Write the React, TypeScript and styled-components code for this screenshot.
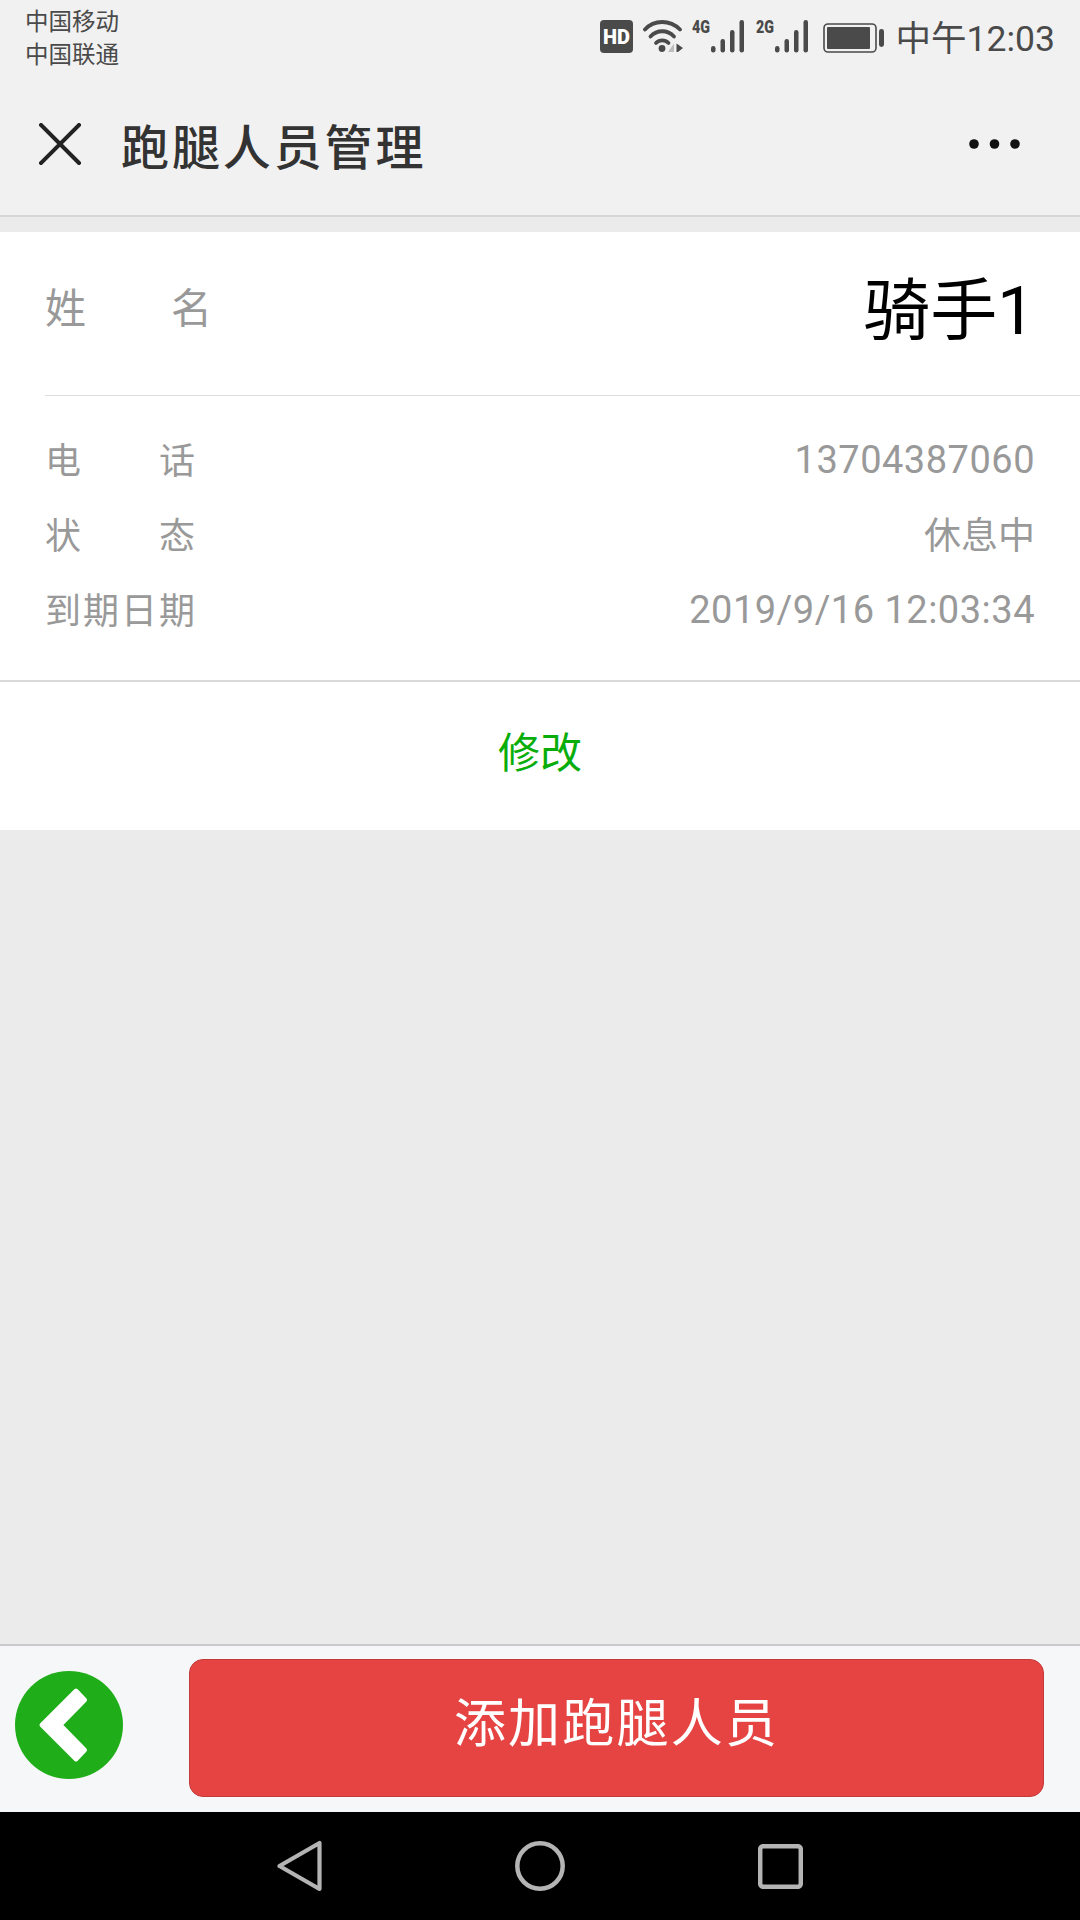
import React from 'react';
import styled, { createGlobalStyle } from 'styled-components';

const FONT = `"Noto Sans CJK SC", sans-serif`;
const NUM_FONT = `Roboto, "Noto Sans CJK SC", sans-serif`;

const GlobalStyle = createGlobalStyle`
  html, body {
    margin: 0;
    padding: 0;
    background: #ebebeb;
  }
  * { box-sizing: border-box; }
`;

const Page = styled.div`
  width: 1080px;
  height: 1920px;
  display: flex;
  flex-direction: column;
  font-family: ${FONT};
  background: #ebebeb;
  overflow: hidden;
`;

// --- status bar ---
const StatusBar = styled.div`
  height: 72px;
  flex: none;
  background: #f1f1f1;
  display: flex;
  justify-content: space-between;
  padding: 4px 25px 0 25px;
  color: #4a4a4a;
`;

const Carriers = styled.div`
  font-size: 23.5px;
  line-height: 33px;
`;

const StatusRight = styled.div`
  display: flex;
  align-items: flex-start;
  padding-top: 15px;
`;

const Icon = styled.svg<{ $left?: number; $top?: number }>`
  flex: none;
  margin-left: ${(p) => p.$left ?? 0}px;
  margin-top: ${(p) => p.$top ?? 0}px;
`;

const Clock = styled.span`
  font-family: ${NUM_FONT};
  font-size: 35.5px;
  line-height: 36px;
  margin-top: 2px;
  margin-left: 12px;
`;

// --- title bar ---
const TitleBar = styled.div`
  height: 145px;
  flex: none;
  background: #f1f1f1;
  border-bottom: 2px solid #d6d6d6;
  display: flex;
  align-items: center;
  padding: 0 60px 0 39px;
  margin-bottom: 15px;
`;

const Title = styled.h1`
  margin: 0 0 0 40px;
  flex: 1;
  font-size: 48px;
  font-weight: 500;
  letter-spacing: 2.9px;
  color: #333;
`;

// --- info card ---
const Card = styled.section`
  background: #fff;
`;

const NameRow = styled.div`
  height: 164px;
  margin-left: 45px;
  padding: 0 45px 14px 0;
  border-bottom: 1px solid #dedede;
  display: flex;
  justify-content: space-between;
  align-items: center;
`;

const NameLabel = styled.span`
  width: 167px;
  margin-bottom: 3px;
  display: flex;
  justify-content: space-between;
  font-size: 41px;
  color: #999;
`;

const NameValue = styled.span`
  font-family: ${NUM_FONT};
  font-size: 67px;
  margin-bottom: 5px;
  color: #000;
`;

const Details = styled.div`
  padding: 25px 45px 35px 45px;
  border-bottom: 2px solid #d9d9d9;
`;

const DetailRow = styled.div`
  height: 74.7px;
  display: flex;
  justify-content: space-between;
  align-items: center;
  color: #999;
  font-size: 36px;
`;

const DetailLabel = styled.span`
  width: 150px;
  display: flex;
  justify-content: space-between;
`;

const DetailValue = styled.span<{ $numeric: boolean }>`
  font-family: ${NUM_FONT};
  font-size: ${(p) => (p.$numeric ? '38px' : '37px')};
  letter-spacing: ${(p) => (p.$numeric ? '0.5px' : '0')};
  padding-top: ${(p) => (p.$numeric ? '4px' : '0')};
`;

const EditRow = styled.div`
  height: 148px;
  padding-bottom: 14px;
  display: flex;
  align-items: center;
  justify-content: center;
  font-size: 42px;
  color: #09ad09;
`;

const Spacer = styled.div`
  flex: 1;
`;

// --- bottom action bar ---
const ActionBar = styled.div`
  height: 168px;
  flex: none;
  background: #f6f7f9;
  border-top: 2px solid #c8c8cc;
  display: flex;
  padding: 13px 36px 0 15px;
`;

const BackCircle = styled.svg`
  width: 108px;
  height: 108px;
  margin-top: 12px;
  flex: none;
`;

const AddButton = styled.div`
  margin-left: 66px;
  flex: 1;
  height: 138px;
  padding-bottom: 18px;
  border-radius: 14px;
  background: #e64343;
  border: 1px solid #c23c3c;
  color: #fff;
  font-size: 52px;
  letter-spacing: 2.2px;
  display: flex;
  align-items: center;
  justify-content: center;
`;

// --- android nav bar ---
const NavBar = styled.div`
  height: 108px;
  flex: none;
  background: #000;
  display: flex;
  align-items: center;
  justify-content: center;
  gap: 193px;
`;

const HdBadge = () => (
  <Icon $top={1} width="33" height="33" viewBox="0 0 33 33">
    <rect width="33" height="33" rx="4" fill="#4a4a4a" />
    <text x="16.5" y="23.5" textAnchor="middle" fontFamily="Roboto, sans-serif" fontWeight="900" fontSize="20" fill="#fff" textLength="27" lengthAdjust="spacingAndGlyphs">HD</text>
  </Icon>
);

const Wifi = () => (
  <Icon $left={10} width="40" height="34" viewBox="0 0 40 34" fill="none">
    <path d="M2 10.5C11 0.5 27 0.5 37 10.5" stroke="#4a4a4a" strokeWidth="3.8" strokeLinecap="round" />
    <path d="M7.5 17.5C14 10.5 24.5 10.5 31 17.5" stroke="#4a4a4a" strokeWidth="3.8" strokeLinecap="round" />
    <path d="M13 24C16.5 20.5 22 20.5 25.5 24" stroke="#4a4a4a" strokeWidth="3.8" strokeLinecap="round" />
    <circle cx="19" cy="29.5" r="3.4" fill="#4a4a4a" />
    <path d="M31 24.5v8.5h-6z" fill="#bdbdbd" />
    <path d="M33.5 24.5v8.5h1.5l5-4z" fill="#4a4a4a" />
  </Icon>
);

// viewBox starts above the bars so the label's line box stays inside the svg
const Signal = ({ label, left }: { label: string; left: number }) => (
  <Icon $left={left} $top={-6} width="53" height="40" viewBox="0 -6 53 40">
    <text x="0" y="14" fontFamily="Roboto, sans-serif" fontWeight="900" fontSize="19" fill="#4a4a4a" textLength="18" lengthAdjust="spacingAndGlyphs">{label}</text>
    <rect x="19" y="27" width="4.5" height="6.5" rx="2.2" fill="#4a4a4a" />
    <rect x="28.5" y="20" width="4.5" height="13.5" rx="2.2" fill="#4a4a4a" />
    <rect x="38" y="11" width="4.5" height="22.5" rx="2.2" fill="#4a4a4a" />
    <rect x="47.5" y="1" width="4.5" height="32.5" rx="2.2" fill="#4a4a4a" />
  </Icon>
);

const Battery = () => (
  <Icon $left={14} $top={4} width="61" height="30" viewBox="0 0 61 30">
    <rect x="1" y="1" width="52" height="28" rx="4" fill="none" stroke="#4a4a4a" strokeWidth="1.6" />
    <rect x="4" y="4" width="43" height="22" rx="1" fill="#4a4a4a" />
    <rect x="56" y="6" width="5" height="18" rx="2.4" fill="#4a4a4a" />
  </Icon>
);

const CloseIcon = () => (
  <svg width="42" height="42" viewBox="0 0 42 42">
    <path d="M2 2L40 40M40 2L2 40" stroke="#222" strokeWidth="4" strokeLinecap="square" />
  </svg>
);

const MoreIcon = () => (
  <svg width="51" height="10" viewBox="0 0 51 10" fill="#111">
    <circle cx="5" cy="5" r="4.8" />
    <circle cx="25.5" cy="5" r="4.8" />
    <circle cx="46" cy="5" r="4.8" />
  </svg>
);

const NavBack = () => (
  <svg width="45" height="52" viewBox="0 0 45 52" fill="none">
    <path d="M42.5 3V49L2.5 26Z" stroke="#b4b4b4" strokeWidth="4.2" strokeLinejoin="round" />
  </svg>
);

const NavHome = () => (
  <svg width="50" height="50" viewBox="0 0 50 50" fill="none">
    <circle cx="25" cy="25" r="22.7" stroke="#b4b4b4" strokeWidth="4.5" />
  </svg>
);

const NavRecent = () => (
  <svg width="45" height="45" viewBox="0 0 45 45" fill="none">
    <rect x="2.2" y="2.2" width="40.6" height="40.6" rx="3" stroke="#b4b4b4" strokeWidth="4.5" />
  </svg>
);

const details = [
  { label: ['电', '话'], value: '13704387060', numeric: true },
  { label: ['状', '态'], value: '休息中', numeric: false },
  { label: ['到', '期', '日', '期'], value: '2019/9/16 12:03:34', numeric: true },
];

const App: React.FC = () => (
  <Page>
    <GlobalStyle />
    <StatusBar>
      <Carriers>
        <div>中国移动</div>
        <div>中国联通</div>
      </Carriers>
      <StatusRight>
        <HdBadge />
        <Wifi />
        <Signal label="4G" left={9} />
        <Signal label="2G" left={11} />
        <Battery />
        <Clock>中午12:03</Clock>
      </StatusRight>
    </StatusBar>

    <TitleBar>
      <CloseIcon />
      <Title>跑腿人员管理</Title>
      <MoreIcon />
    </TitleBar>

    <Card>
      <NameRow>
        <NameLabel>
          <span>姓</span>
          <span>名</span>
        </NameLabel>
        <NameValue>骑手1</NameValue>
      </NameRow>
      <Details>
        {details.map((d) => (
          <DetailRow key={d.value}>
            <DetailLabel>
              {d.label.map((c, i) => (
                <span key={i}>{c}</span>
              ))}
            </DetailLabel>
            <DetailValue $numeric={d.numeric}>{d.value}</DetailValue>
          </DetailRow>
        ))}
      </Details>
      <EditRow>修改</EditRow>
    </Card>

    <Spacer />

    <ActionBar>
      <BackCircle viewBox="0 0 108 108">
        <circle cx="54" cy="54" r="54" fill="#1fae1a" />
        <path
          d="M26.5 54L61 19.5L70 29L45.5 54L70 79L61 88.5Z"
          fill="#fff"
          stroke="#fff"
          strokeWidth="4"
          strokeLinejoin="round"
        />
      </BackCircle>
      <AddButton>添加跑腿人员</AddButton>
    </ActionBar>

    <NavBar>
      <NavBack />
      <NavHome />
      <NavRecent />
    </NavBar>
  </Page>
);

export default App;
